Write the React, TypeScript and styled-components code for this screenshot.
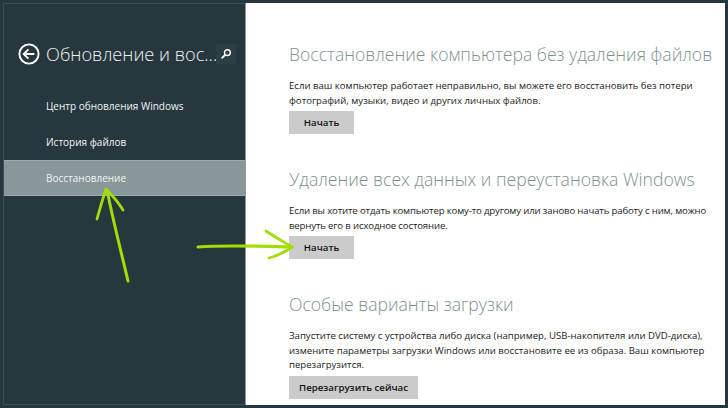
import { createGlobalStyle, styled } from 'styled-components'

const GlobalStyle = createGlobalStyle`
  html, body {
    margin: 0;
    padding: 0;
    background: #26383d;
  }
`

const Screen = styled.div`
  position: relative;
  width: 728px;
  height: 408px;
  box-sizing: border-box;
  padding: 3px;
  background: #26383d;
  overflow: hidden;
  font-family: 'Open Sans', 'Noto Sans', sans-serif;
`

const Frame = styled.div`
  display: flex;
  height: 402px;
  box-sizing: border-box;
`

const Sidebar = styled.aside`
  width: 243px;
  flex: none;
  box-sizing: border-box;
  padding-top: 39px;
  background: #26383d;
  border: 1px solid #3b4f54;
  border-right-color: #8a9a9d;
`

const SidebarHeader = styled.div`
  display: flex;
  align-items: center;
  height: 22px;
  padding-left: 14px;
`

const BackIcon = styled.svg`
  width: 22px;
  height: 22px;
  flex: none;
  margin-right: 6px;
`

const PageTitle = styled.h1`
  width: 170px;
  margin: 0;
  flex: none;
  font-size: 18.2px;
  font-weight: 300;
  line-height: 22px;
  color: #eef2f2;
  white-space: nowrap;
`

const SearchBox = styled.div`
  display: flex;
  align-items: center;
  justify-content: center;
  width: 20px;
  height: 20px;
  background: #2b3f44;
`

const NavList = styled.nav`
  display: flex;
  flex-direction: column;
  margin-top: 23px;
`

const NavItem = styled.div<{ $active?: boolean }>`
  display: flex;
  align-items: center;
  height: 36px;
  padding-left: 42px;
  font-size: 10px;
  color: #f1f4f4;
  background: ${p => (p.$active ? '#87979a' : 'transparent')};
  border-top: ${p => (p.$active ? '1px solid #9daaad' : 'none')};
  border-bottom: ${p => (p.$active ? '1px solid #9daaad' : 'none')};
  box-sizing: border-box;
`

const Main = styled.main`
  flex: 1;
  min-width: 0;
  box-sizing: border-box;
  padding: 39px 0 0 43px;
  background: #ffffff;
`

const Section = styled.section`
  height: 125px;
`

const SectionTitle = styled.h2`
  margin: 0 0 12px;
  font-size: 17.6px;
  font-weight: 300;
  line-height: 25px;
  color: #7e9091;
  white-space: nowrap;
`

const Description = styled.p<{ $tight?: boolean }>`
  margin: 0 0 3px;
  width: 430px;
  font-size: 9.6px;
  line-height: 14.5px;
  letter-spacing: ${p => (p.$tight ? '-0.15px' : 'normal')};
  color: #1c1c1c;
`

const ActionButton = styled.button`
  display: block;
  height: 23px;
  min-width: 65px;
  padding: 0 10px;
  border: 0;
  background: #cbcbcb;
  color: #111111;
  font-family: inherit;
  font-size: 9.7px;
  font-weight: 600;
`

const Arrows = styled.svg`
  position: absolute;
  left: 0;
  top: 0;
  width: 728px;
  height: 408px;
  pointer-events: none;
`

export default function App() {
  return (
    <>
      <GlobalStyle />
      <Screen>
        <Frame>
          <Sidebar>
            <SidebarHeader>
              <BackIcon viewBox="0 0 22 22">
                <circle cx="11" cy="11" r="9.6" fill="none" stroke="#fff" strokeWidth="1.9" />
                <path d="M5.8 11h10.6M10.4 6.4 5.8 11l4.6 4.6" fill="none" stroke="#fff" strokeWidth="2" />
              </BackIcon>
              <PageTitle>Обновление и вос...</PageTitle>
              <SearchBox>
                <svg width="12" height="12" viewBox="0 0 12 12">
                  <circle cx="7.4" cy="4.6" r="2.9" fill="none" stroke="#fff" strokeWidth="1.4" />
                  <path d="M5.2 6.8 1.6 10.4" stroke="#fff" strokeWidth="1.9" />
                </svg>
              </SearchBox>
            </SidebarHeader>
            <NavList>
              <NavItem>Центр обновления Windows</NavItem>
              <NavItem>История файлов</NavItem>
              <NavItem $active>Восстановление</NavItem>
            </NavList>
          </Sidebar>
          <Main>
            <Section>
              <SectionTitle>Восстановление компьютера без удаления файлов</SectionTitle>
              <Description>
                Если ваш компьютер работает неправильно, вы можете его восстановить без потери
                фотографий, музыки, видео и других личных файлов.
              </Description>
              <ActionButton>Начать</ActionButton>
            </Section>
            <Section>
              <SectionTitle>Удаление всех данных и переустановка Windows</SectionTitle>
              <Description $tight>
                Если вы хотите отдать компьютер кому-то другому или заново начать работу с ним, можно
                вернуть его в исходное состояние.
              </Description>
              <ActionButton>Начать</ActionButton>
            </Section>
            <Section>
              <SectionTitle>Особые варианты загрузки</SectionTitle>
              <Description>
                Запустите систему с устройства либо диска (например, USB-накопителя или DVD-диска),
                измените параметры загрузки Windows или восстановите ее из образа. Ваш компьютер
                перезагрузится.
              </Description>
              <ActionButton>Перезагрузить сейчас</ActionButton>
            </Section>
          </Main>
        </Frame>
        <Arrows viewBox="0 0 728 408">
          <g fill="none" stroke="#a3dc06" strokeLinecap="round" strokeLinejoin="round">
            <path d="M128 281 C122 255 114 225 107 190" strokeWidth="3" />
            <path d="M97 219 C100 208 103 198 106 189 C112 195 118 202 123 210" strokeWidth="2.8" />
            <path d="M198 247 C225 245 255 246 292 247" strokeWidth="3.2" />
            <path d="M266 231 C275 237 284 242 292 247 C285 252 277 256 269 258" strokeWidth="2.8" />
          </g>
        </Arrows>
      </Screen>
    </>
  )
}
